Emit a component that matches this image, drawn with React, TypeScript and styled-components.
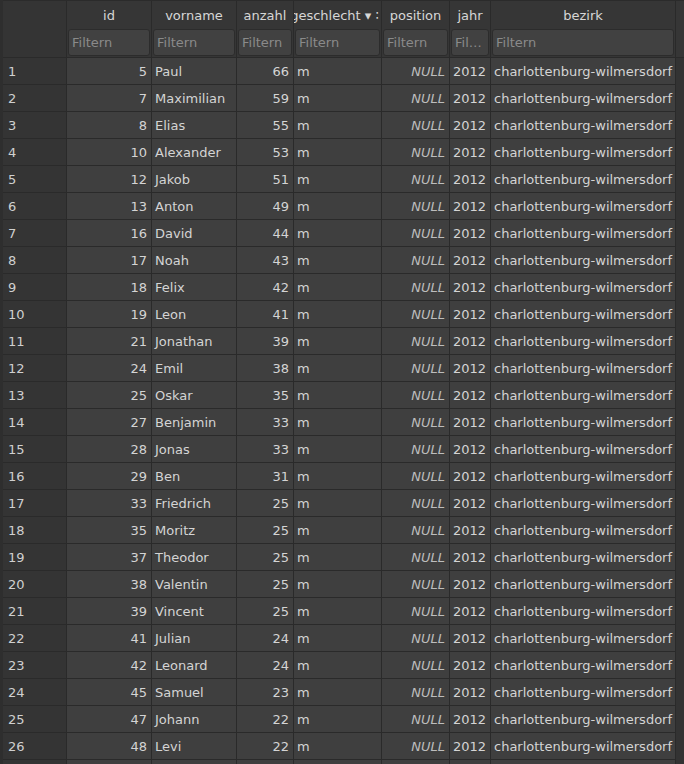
import React from 'react';
import styled, { createGlobalStyle } from 'styled-components';

const GlobalStyle = createGlobalStyle`
  html, body {
    margin: 0;
    padding: 0;
    background: #2e2e2e;
    overflow: hidden;
    height: 764px;
  }
  * {
    box-sizing: border-box;
  }
`;

const COLS = '64px 85px 85px 57px 88px 68px 41px 185px 1fr';

const Frame = styled.div`
  padding-left: 3px;
  height: 764px;
  overflow: hidden;
  background: #2e2e2e;
  font-family: 'DejaVu Sans', 'Liberation Sans', sans-serif;
  font-size: 13px;
  color: #d4d4d4;
`;

const Grid = styled.div`
  display: grid;
  grid-template-columns: ${COLS};
  grid-template-rows: 28px 29px;
  grid-auto-rows: 27px;
  border-top: 1px solid #2b2b2b;
`;

const HeadCell = styled.div`
  background: #363636;
  border-right: 1px solid #2a2a2a;
  display: flex;
  align-items: center;
  justify-content: center;
  overflow: hidden;
  white-space: nowrap;
  color: #d6d6d6;
`;

const HeadText = styled.span<{ $extra?: boolean }>`
  flex: none;
  padding-right: ${(p) => (p.$extra ? '6px' : '0')};
`;

const Corner = styled.div`
  grid-row: span 2;
  background: #343434;
  border-right: 1px solid #2a2a2a;
  border-bottom: 1px solid #2a2a2a;
`;

const FilterCell = styled.div`
  background: #363636;
  border-right: 1px solid #2a2a2a;
  border-bottom: 1px solid #2a2a2a;
  padding: 0 1px 1px 1px;
`;

const FilterInput = styled.input`
  width: 100%;
  height: 100%;
  background: #414141;
  border: 1px solid #2c2c2c;
  border-radius: 3px;
  padding: 0 3px;
  font-family: 'DejaVu Sans', 'Liberation Sans', sans-serif;
  font-size: 13px;
  color: #d4d4d4;
  outline: none;
  text-overflow: ellipsis;

  &::placeholder {
    color: #8a8a8a;
    text-overflow: ellipsis;
  }
`;

const RowHead = styled.div`
  background: #343434;
  border-right: 1px solid #2a2a2a;
  border-bottom: 1px solid #2a2a2a;
  display: flex;
  align-items: center;
  padding-left: 5px;
  color: #d0d0d0;
`;

const Cell = styled.div<{ $align?: 'left' | 'right'; $null?: boolean }>`
  background: #3f3f3f;
  border-right: 1px solid #2a2a2a;
  border-bottom: 1px solid #2a2a2a;
  display: flex;
  align-items: center;
  justify-content: ${(p) => (p.$align === 'right' ? 'flex-end' : 'flex-start')};
  padding: 0 4px 0 3px;
  overflow: hidden;
  white-space: nowrap;
  font-style: ${(p) => (p.$null ? 'italic' : 'normal')};
  color: ${(p) => (p.$null ? '#bdbdbd' : '#d4d4d4')};
`;

const Spare = styled.div`
  grid-row: span 2;
  background: #363636;
  border-bottom: 1px solid #2a2a2a;
`;

const SpareBody = styled.div`
  background: #333333;
`;

const headers = ['id', 'vorname', 'anzahl', 'geschlecht \u25BE \u2236', 'position', 'jahr', 'bezirk'];

const rows: [number, string, number][] = [
  [5, 'Paul', 66],
  [7, 'Maximilian', 59],
  [8, 'Elias', 55],
  [10, 'Alexander', 53],
  [12, 'Jakob', 51],
  [13, 'Anton', 49],
  [16, 'David', 44],
  [17, 'Noah', 43],
  [18, 'Felix', 42],
  [19, 'Leon', 41],
  [21, 'Jonathan', 39],
  [24, 'Emil', 38],
  [25, 'Oskar', 35],
  [27, 'Benjamin', 33],
  [28, 'Jonas', 33],
  [29, 'Ben', 31],
  [33, 'Friedrich', 25],
  [35, 'Moritz', 25],
  [37, 'Theodor', 25],
  [38, 'Valentin', 25],
  [39, 'Vincent', 25],
  [41, 'Julian', 24],
  [42, 'Leonard', 24],
  [45, 'Samuel', 23],
  [47, 'Johann', 22],
  [48, 'Levi', 22],
];

export default function App() {
  return (
    <Frame>
      <GlobalStyle />
      <Grid>
        <Corner />
        {headers.map((h, i) => (
          <HeadCell key={h}>
            <HeadText $extra={i === 3}>{h}</HeadText>
          </HeadCell>
        ))}
        <Spare />
        {headers.map((h) => (
          <FilterCell key={h}>
            <FilterInput placeholder="Filtern" />
          </FilterCell>
        ))}
        {rows.map(([id, name, n], i) => (
          <React.Fragment key={id}>
            <RowHead>{i + 1}</RowHead>
            <Cell $align="right">{id}</Cell>
            <Cell>{name}</Cell>
            <Cell $align="right">{n}</Cell>
            <Cell>m</Cell>
            <Cell $align="right" $null>
              NULL
            </Cell>
            <Cell>2012</Cell>
            <Cell>charlottenburg-wilmersdorf</Cell>
            <SpareBody />
          </React.Fragment>
        ))}
        <RowHead />
        <Cell />
        <Cell />
        <Cell />
        <Cell />
        <Cell />
        <Cell />
        <Cell />
        <SpareBody />
      </Grid>
    </Frame>
  );
}
